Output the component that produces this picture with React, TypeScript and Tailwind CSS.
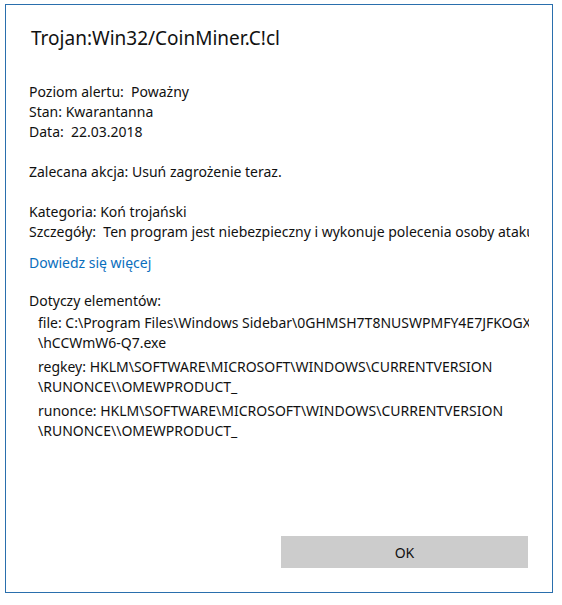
export default function App() {
  const items = [
    ['file: C:\\Program Files\\Windows Sidebar\\0GHMSH7T8NUSWPMFY4E7JFKOGXYZ', '\\hCCWmW6-Q7.exe'],
    ['regkey: HKLM\\SOFTWARE\\MICROSOFT\\WINDOWS\\CURRENTVERSION', '\\RUNONCE\\\\OMEWPRODUCT_'],
    ['runonce: HKLM\\SOFTWARE\\MICROSOFT\\WINDOWS\\CURRENTVERSION', '\\RUNONCE\\\\OMEWPRODUCT_'],
  ];

  return (
    <div className="h-[605px] w-[562px] bg-white pl-[5px] pt-[4px] font-['Noto_Sans',sans-serif] text-black">
      <div className="flex h-[589px] w-[548px] flex-col border border-[#2a6fad] bg-white">
        <div className="flex-1 pl-[23px]">
          <div className="w-[500px] overflow-hidden">
            <h1 className="mt-[19px] pl-[2px] text-[19px] leading-[28px] text-[#111]">Trojan:Win32/CoinMiner.C!cl</h1>

            <div className="mt-[30px] text-[14px] leading-[20px] text-[#111]">
              <p>Poziom alertu:&nbsp; Poważny</p>
              <p>Stan: Kwarantanna</p>
              <p>Data:&nbsp; 22.03.2018</p>
            </div>

            <p className="mt-[20px] text-[14px] leading-[20px] text-[#111]">Zalecana akcja: Usuń zagrożenie teraz.</p>

            <div className="mt-[20px] text-[14px] leading-[20px] text-[#111]">
              <p>Kategoria: Koń trojański</p>
              <p className="whitespace-nowrap">
                Szczegóły:&nbsp; Ten program jest niebezpieczny i wykonuje polecenia osoby atakującej.
              </p>
            </div>

            <p className="mt-[11px] text-[14px] leading-[20px] text-[#0a6ebd]">Dowiedz się więcej</p>

            <div className="mt-[18px] text-[14px] leading-[20px] text-[#111]">
              <p>Dotyczy elementów:</p>
              <div className="mt-[2px] flex flex-col gap-[4px] pl-[9px]">
                {items.map(([a, b]) => (
                  <div key={a + b} className="whitespace-nowrap">
                    <p>{a}</p>
                    <p>{b}</p>
                  </div>
                ))}
              </div>
            </div>
          </div>
        </div>

        <div className="flex justify-end pb-[24px] pr-[24px]">
          <button className="h-[32px] w-[247px] bg-[#cccccc] text-[14px] text-[#111]">OK</button>
        </div>
      </div>
    </div>
  );
}
